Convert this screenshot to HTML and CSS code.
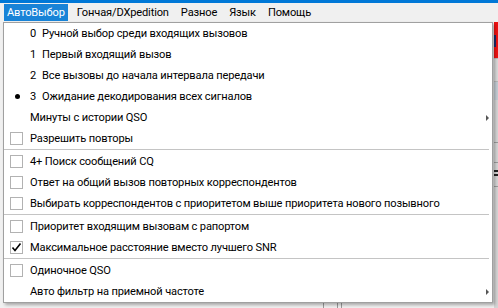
FILE: index.html
```html
<!DOCTYPE html>
<html lang="ru">
<head>
  <meta charset="UTF-8">
  <meta name="viewport" content="width=device-width, initial-scale=1.0">
  <title>АвтоВыбор</title>
  <link rel="stylesheet" href="styles.css">
</head>
<body>
  <div class="titlebar"></div>

  <!-- Main menu bar -->
  <nav class="menubar">
    <span class="menubar-item active">АвтоВыбор</span>
    <span class="menubar-item">Гончая/DXpedition</span>
    <span class="menubar-item">Разное</span>
    <span class="menubar-item">Язык</span>
    <span class="menubar-item">Помощь</span>
  </nav>

  <!-- Window contents behind the open menu -->
  <div class="workspace">
    <div class="workspace-main">
      <div class="grid-lines">
        <span></span><span></span><span></span>
      </div>
    </div>
    <div class="side-panel">
      <div class="panel-red"><span class="panel-dot"></span></div>
      <div class="panel-light"></div>
      <div class="panel-steel"></div>
      <div class="panel-gray">
        <span class="tick"></span>
        <span class="tick"></span>
        <span class="grip"></span>
        <span class="tick"></span>
      </div>
    </div>
  </div>

  <!-- Open drop-down menu -->
  <div class="dropdown">
    <div class="item"><span class="mark"></span><span class="num">0</span>Ручной выбор среди входящих вызовов</div>
    <div class="item"><span class="mark"></span><span class="num">1</span>Первый входящий вызов</div>
    <div class="item"><span class="mark"></span><span class="num">2</span>Все вызовы до начала интервала передачи</div>
    <div class="item"><span class="mark"><span class="bullet"></span></span><span class="num">3</span>Ожидание декодирования всех сигналов</div>
    <div class="item has-sub"><span class="mark"></span>Минуты с истории QSO<span class="arrow"></span></div>
    <div class="item"><span class="mark"><span class="box"></span></span>Разрешить повторы</div>
    <div class="sep"></div>
    <div class="item"><span class="mark"><span class="box"></span></span>4+ Поиск сообщений CQ</div>
    <div class="item"><span class="mark"><span class="box"></span></span>Ответ на общий вызов повторных корреспондентов</div>
    <div class="item"><span class="mark"><span class="box"></span></span>Выбирать корреспондентов с приоритетом выше приоритета нового позывного</div>
    <div class="sep"></div>
    <div class="item"><span class="mark"><span class="box"></span></span>Приоритет входящим вызовам с рапортом</div>
    <div class="item">
      <span class="mark">
        <span class="box">
          <svg width="11" height="11" viewBox="0 0 11 11"><polyline points="1.5,5.5 4,8.5 9.5,1.5" fill="none" stroke="#000" stroke-width="1.6"/></svg>
        </span>
      </span>Максимальное расстояние вместо лучшего SNR
    </div>
    <div class="sep"></div>
    <div class="item"><span class="mark"><span class="box"></span></span>Одиночное QSO</div>
    <div class="item has-sub"><span class="mark"></span>Авто фильтр на приемной частоте<span class="arrow"></span></div>
  </div>
</body>
</html>
```

FILE: styles.css
```css
/* General Styles */
* {
  margin: 0;
  padding: 0;
  box-sizing: border-box;
}

html, body {
  height: 100%;
}

body {
  font-family: Roboto, 'Noto Sans', sans-serif;
  font-size: 11.1px;
  letter-spacing: -0.15px;
  color: #000;
  background-color: #f0f0f0;
  display: flex;
  flex-direction: column;
  overflow: hidden;
}

.titlebar {
  height: 3px;
  background-color: #0078d7;
}

/* Menu bar */
.menubar {
  height: 19px;
  display: flex;
  align-items: center;
  gap: 6px;
  padding-left: 4px;
  background-color: #f0f0f0;
}

.menubar-item {
  height: 17px;
  line-height: 17px;
  padding: 0 3px;
}

.menubar-item.active {
  background-color: #1883d7;
  color: #fff;
}

/* Window behind the menu */
.workspace {
  flex: 1;
  display: flex;
}

.workspace-main {
  flex: 1;
  display: flex;
  align-items: flex-end;
}

.grid-lines {
  display: flex;
  gap: 13px;
  margin-left: 323px;
  height: 8px;
}

.grid-lines span {
  width: 1px;
  background-color: #9a9a9a;
}

.grid-lines span:last-child {
  margin-left: -10px;
}

.side-panel {
  width: 4px;
  display: flex;
  flex-direction: column;
}

.panel-red {
  height: 36px;
  background-color: #ee1111;
  padding-top: 13px;
}

.panel-dot {
  display: block;
  width: 2px;
  height: 12px;
  background-color: #1a2a6a;
}

.panel-light {
  height: 24px;
  background-color: #d9d9d9;
  border-top: 1px solid #b8b8b8;
  border-bottom: 1px solid #b8b8b8;
}

.panel-steel {
  height: 18px;
  background-color: #c3ccd3;
}

.panel-gray {
  flex: 1;
  background-color: #d4d4d4;
  padding-top: 42px;
}

.tick {
  display: block;
  height: 1px;
  margin-bottom: 19px;
  background-color: #9c9c9c;
}

.grip {
  display: block;
  height: 6px;
  margin: -12px 0 10px;
  border-top: 2px solid #222;
  border-bottom: 2px solid #222;
}

/* Drop-down menu */
.dropdown {
  position: absolute;
  left: 3px;
  top: 22px;
  width: 490px;
  background-color: #fff;
  border: 1px solid #a0a0a0;
  box-shadow: 2px 2px 3px rgba(0, 0, 0, 0.3);
}

.item {
  height: 21px;
  display: flex;
  align-items: center;
  white-space: nowrap;
}

.mark {
  width: 26px;
  height: 21px;
  flex: none;
  display: flex;
  align-items: center;
}

.box {
  width: 13px;
  height: 13px;
  margin-left: 6px;
  border: 1px solid #b2b2b2;
  display: flex;
  align-items: center;
  justify-content: center;
}

.bullet {
  width: 5px;
  height: 5px;
  margin-left: 11px;
  border-radius: 50%;
  background-color: #000;
}

.num {
  width: 12px;
  flex: none;
}

.arrow {
  margin-left: auto;
  margin-right: 3px;
  width: 0;
  height: 0;
  border-top: 3px solid transparent;
  border-bottom: 3px solid transparent;
  border-left: 3px solid #555;
}

.sep {
  height: 1px;
  margin: 0 3px 1px 0;
  background-color: #c4c4c4;
}
```
